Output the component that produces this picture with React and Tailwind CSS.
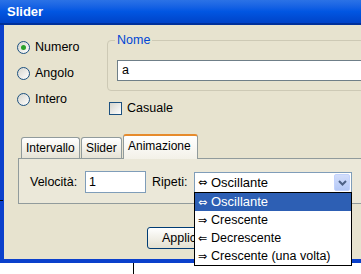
import React from 'react';

const font = { fontFamily: '"Liberation Sans", Arial, sans-serif' };
const arrowFont = { fontFamily: '"DejaVu Sans", sans-serif' };

function Radio({ label, checked }) {
  return (
    <div className="h-[26px] flex items-center gap-[5px]">
      <span className="w-[13px] h-[13px] rounded-full border border-[#1c5180] bg-gradient-to-br from-[#d6d5ce] to-white flex items-center justify-center">
        {checked && <span className="w-[5px] h-[5px] rounded-full bg-[#2aa22a]" />}
      </span>
      <span>{label}</span>
    </div>
  );
}

function Tab({ label, active, width }) {
  if (active) {
    return (
      <div className={`relative z-10 h-[25px] -mb-px ${width} border border-b-0 border-[#919b9c] border-t-[#e68b2c] border-t-2 rounded-t-[3px] bg-gradient-to-b from-white to-[#f3f1e8] pl-[4px] pt-[2px] leading-[16px] whitespace-nowrap overflow-hidden`}>
        {label}
      </div>
    );
  }
  return (
    <div className={`h-[21px] ${width} border border-b-0 border-[#919b9c] rounded-t-[3px] bg-gradient-to-b from-white to-[#e6e3d6] pl-[4px] pt-[3px] leading-[15px] whitespace-nowrap overflow-hidden`}>
      {label}
    </div>
  );
}

const options = [
  { arrow: '⇔', text: 'Oscillante' },
  { arrow: '⇒', text: 'Crescente' },
  { arrow: '⇐', text: 'Decrescente' },
  { arrow: '⇒', text: 'Crescente (una volta)' },
];

export default function App() {
  return (
    <div className="relative w-[361px] h-[274px] overflow-hidden bg-white text-[12.5px] text-black" style={font}>
      <div className="h-[263px] flex flex-col">
        {/* title bar */}
        <div className="h-[25px] shrink-0 bg-gradient-to-b from-[#2b72e6] via-[#0156e2] to-[#0043c8] border-b-2 border-[#00309a] pl-[7px] flex items-center">
          <span className="text-white font-bold text-[13px] leading-none">Slider</span>
        </div>

        {/* body */}
        <div className="flex-1 overflow-hidden bg-[#e7e3cf] border-l-4 border-b-4 border-[#0b40cc] flex flex-col">
          <div className="h-[109px] shrink-0 flex">
            <div className="w-[103px] shrink-0 pl-[13px] pt-[9px]">
              <Radio label="Numero" checked />
              <Radio label="Angolo" />
              <Radio label="Intero" />
            </div>
            <div className="flex-1 min-w-0 pt-[7.5px]">
              <fieldset className="w-[280px] border border-[#cdc9b5] rounded-[4px] pb-[9px]">
                <legend className="ml-[7px] px-[2px] leading-[15px] text-[#0046d5]">Nome</legend>
                <div className="ml-[9px] mt-[12px] h-[21px] w-[300px] bg-white border border-[#6f7f88] pl-[4px] flex items-center">
                  a
                </div>
              </fieldset>
              <div className="mt-[10px] ml-[2px] flex items-center gap-[5px] leading-[15px]">
                <span className="w-[13px] h-[13px] border border-[#1c5180] bg-gradient-to-br from-[#d6d5ce] to-white" />
                <span>Casuale</span>
              </div>
            </div>
          </div>

          {/* tabs */}
          <div className="ml-[14px] text-[12px]">
            <div className="h-[24px] flex items-end gap-px pl-[3px]">
              <Tab label="Intervallo" width="w-[59px]" />
              <Tab label="Slider" width="w-[41px]" />
              <Tab label="Animazione" width="w-[75px]" active />
            </div>
            <div className="w-[360px] h-[46px] border border-[#919b9c] bg-[#ebe8d9] pl-[11px] pt-[12px] flex items-start text-[12.5px]">
              <span className="w-[55px] h-[22px] flex items-center">Velocità:</span>
              <div className="w-[61px] h-[22px] bg-white border border-[#7f9db9] pl-[3px] flex items-center">1</div>
              <span className="ml-[6px] w-[42px] h-[22px] flex items-center">Ripeti:</span>
              <div className="mt-px w-[158px] h-[21px] bg-white border border-[#7f9db9] pl-[3px] flex items-center">
                <span className="w-[13px] text-[11px] leading-none" style={arrowFont}>⇔</span>
                <span className="text-[13px]">Oscillante</span>
                <span className="ml-auto mr-px w-[16px] h-[17px] rounded-[2px] bg-gradient-to-b from-[#d3defb] to-[#b4c8f6] border border-[#c3d3fd] flex items-center justify-center">
                  <svg width="9" height="6" viewBox="0 0 9 6">
                    <path d="M1 1 L4.5 4.5 L8 1" fill="none" stroke="#4d6185" strokeWidth="2" />
                  </svg>
                </span>
              </div>
            </div>
          </div>

          {/* buttons */}
          <div className="mt-[23px] pl-[143px]">
            <div className="w-[78px] h-[22px] rounded-[3px] border border-[#003c74] bg-gradient-to-b from-white to-[#e3e0d0] pl-[14px] flex items-center">
              Applica
            </div>
          </div>
        </div>
      </div>

      <div className="h-[11px] ml-[133px] w-px bg-black" />

      {/* stray tick at the left edge */}
      <div className="absolute left-0 top-[200px] w-[3px] h-px bg-black" />

      {/* open combo list */}
      <div className="absolute left-[194px] top-[192px] w-[158px] border border-black bg-white">
        {options.map((o, i) => (
          <div
            key={i}
            className={
              'h-[18px] flex items-center pl-[3px] ' +
              (i === 0 ? 'bg-[#2d5fb4] text-white' : 'text-black')
            }
          >
            <span className="w-[13px] text-[11px] leading-none" style={arrowFont}>{o.arrow}</span>
            <span className={i === 0 ? 'text-[13px]' : ''}>{o.text}</span>
          </div>
        ))}
      </div>
    </div>
  );
}
